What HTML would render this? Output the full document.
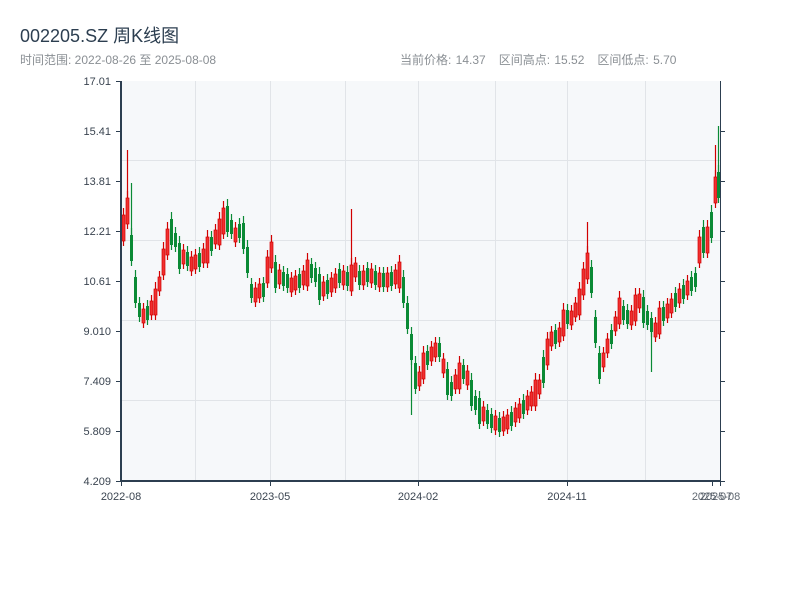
<!DOCTYPE html>
<html><head><meta charset="utf-8"><style>
body{margin:0;width:800px;height:600px;background:#fff;overflow:hidden;font-family:"Liberation Sans","Noto Sans CJK SC",sans-serif}
#t{position:absolute;left:20px;top:22px;font-size:18px;color:#2c3e50}
#s{position:absolute;left:20px;top:51px;font-size:12px;color:#8a8f94}
#r{position:absolute;left:400px;top:51px;font-size:12px;color:#8a8f94;word-spacing:1px}
svg{position:absolute;left:0;top:0}
</style></head><body>
<div id="t">002205.SZ 周K线图</div>
<div id="s">时间范围: 2022-08-26 至 2025-08-08</div>
<div id="r">当前价格: 14.37&nbsp;&nbsp; 区间高点: 15.52&nbsp;&nbsp; 区间低点: 5.70</div>
<svg width="800" height="600" xmlns="http://www.w3.org/2000/svg" xmlns:xlink="http://www.w3.org/1999/xlink">
<defs>
<g id="a"><line x1="0" y1="-13" x2="0" y2="12" stroke="#d10000" stroke-width="1.2"/><rect x="-1.5" y="-7" width="3" height="14" fill="#f03030" stroke="#d10000" stroke-width="0.7"/></g>
<g id="b"><line x1="0" y1="-20" x2="0" y2="18" stroke="#d10000" stroke-width="1.2"/><rect x="-1.5" y="-13" width="3" height="26" fill="#f03030" stroke="#d10000" stroke-width="0.7"/></g>
<g id="c"><line x1="0" y1="-13" x2="0" y2="12" stroke="#0a8a35" stroke-width="1.2"/><rect x="-1.5" y="-7" width="3" height="14" fill="#0a8a35"/></g>
<g id="d"><line x1="0" y1="-20" x2="0" y2="18" stroke="#0a8a35" stroke-width="1.2"/><rect x="-1.5" y="-13" width="3" height="26" fill="#0a8a35"/></g>
</defs>
<rect x="121" y="81" width="599" height="400" fill="#f6f8fa"/>
<g stroke="#e1e4e8" stroke-width="1">
<line x1="195.5" y1="81" x2="195.5" y2="481"/><line x1="270.5" y1="81" x2="270.5" y2="481"/><line x1="345.5" y1="81" x2="345.5" y2="481"/><line x1="418.5" y1="81" x2="418.5" y2="481"/><line x1="495.5" y1="81" x2="495.5" y2="481"/><line x1="567.5" y1="81" x2="567.5" y2="481"/><line x1="645.5" y1="81" x2="645.5" y2="481"/>
<line x1="121" y1="160.5" x2="720" y2="160.5"/><line x1="121" y1="240.5" x2="720" y2="240.5"/><line x1="121" y1="320.5" x2="720" y2="320.5"/><line x1="121" y1="400.5" x2="720" y2="400.5"/>
</g>
<g stroke="#d10000" stroke-width="1.2"><line x1="127.5" y1="150" x2="127.5" y2="200"/><line x1="351.5" y1="209" x2="351.5" y2="270"/><line x1="587.5" y1="222" x2="587.5" y2="260"/><line x1="715.5" y1="145" x2="715.5" y2="180"/></g>
<g stroke="#0a8a35" stroke-width="1.2"><line x1="131.5" y1="183" x2="131.5" y2="240"/><line x1="651.5" y1="325" x2="651.5" y2="372"/><line x1="718.5" y1="126" x2="718.5" y2="175"/><line x1="411.5" y1="350" x2="411.5" y2="415"/></g>
<g>
<use xlink:href="#b" x="123.5" y="228"/><use xlink:href="#b" x="127.5" y="211"/><use xlink:href="#d" x="131.5" y="248"/><use xlink:href="#d" x="135.5" y="290"/><use xlink:href="#c" x="139.5" y="310"/><use xlink:href="#a" x="143.5" y="316"/><use xlink:href="#c" x="147.5" y="313"/><use xlink:href="#a" x="151.5" y="308"/><use xlink:href="#b" x="155.5" y="302"/><use xlink:href="#a" x="159.5" y="284"/>
<use xlink:href="#b" x="163.5" y="262"/><use xlink:href="#b" x="167.5" y="242"/><use xlink:href="#d" x="171.5" y="232"/><use xlink:href="#c" x="175.5" y="240"/><use xlink:href="#d" x="179.5" y="256"/><use xlink:href="#a" x="183.5" y="257"/><use xlink:href="#c" x="187.5" y="259"/><use xlink:href="#a" x="191.5" y="264"/><use xlink:href="#a" x="195.5" y="262"/><use xlink:href="#c" x="199.5" y="260"/>
<use xlink:href="#a" x="203.5" y="256"/><use xlink:href="#b" x="207.5" y="250"/><use xlink:href="#c" x="211.5" y="244"/><use xlink:href="#a" x="215.5" y="237"/><use xlink:href="#b" x="219.5" y="232"/><use xlink:href="#b" x="223.5" y="221"/><use xlink:href="#d" x="227.5" y="219"/><use xlink:href="#c" x="231.5" y="227"/><use xlink:href="#a" x="235.5" y="235"/><use xlink:href="#c" x="239.5" y="231"/>
<use xlink:href="#d" x="243.5" y="236"/><use xlink:href="#d" x="247.5" y="260"/><use xlink:href="#c" x="251.5" y="291"/><use xlink:href="#a" x="255.5" y="295"/><use xlink:href="#a" x="259.5" y="291"/><use xlink:href="#c" x="263.5" y="290"/><use xlink:href="#b" x="267.5" y="270"/><use xlink:href="#b" x="271.5" y="255"/><use xlink:href="#d" x="275.5" y="275"/><use xlink:href="#a" x="279.5" y="277"/>
<use xlink:href="#c" x="283.5" y="279"/><use xlink:href="#c" x="287.5" y="281"/><use xlink:href="#a" x="291.5" y="285"/><use xlink:href="#a" x="295.5" y="283"/><use xlink:href="#c" x="299.5" y="281"/><use xlink:href="#a" x="303.5" y="278"/><use xlink:href="#b" x="307.5" y="273"/><use xlink:href="#c" x="311.5" y="271"/><use xlink:href="#c" x="315.5" y="275"/><use xlink:href="#d" x="319.5" y="287"/>
<use xlink:href="#a" x="323.5" y="289"/><use xlink:href="#c" x="327.5" y="287"/><use xlink:href="#a" x="331.5" y="285"/><use xlink:href="#a" x="335.5" y="281"/><use xlink:href="#c" x="339.5" y="276"/><use xlink:href="#a" x="343.5" y="278"/><use xlink:href="#c" x="347.5" y="279"/><use xlink:href="#b" x="351.5" y="278"/><use xlink:href="#a" x="355.5" y="270"/><use xlink:href="#c" x="359.5" y="278"/>
<use xlink:href="#a" x="363.5" y="278"/><use xlink:href="#c" x="367.5" y="275"/><use xlink:href="#a" x="371.5" y="276"/><use xlink:href="#c" x="375.5" y="278"/><use xlink:href="#a" x="379.5" y="280"/><use xlink:href="#c" x="383.5" y="280"/><use xlink:href="#a" x="387.5" y="280"/><use xlink:href="#c" x="391.5" y="279"/><use xlink:href="#a" x="395.5" y="277"/><use xlink:href="#b" x="399.5" y="275"/>
<use xlink:href="#d" x="403.5" y="290"/><use xlink:href="#d" x="407.5" y="316"/><use xlink:href="#d" x="411.5" y="347"/><use xlink:href="#d" x="415.5" y="376"/><use xlink:href="#a" x="419.5" y="379"/><use xlink:href="#b" x="423.5" y="366"/><use xlink:href="#c" x="427.5" y="358"/><use xlink:href="#a" x="431.5" y="354"/><use xlink:href="#a" x="435.5" y="350"/><use xlink:href="#c" x="439.5" y="350"/>
<use xlink:href="#a" x="443.5" y="366"/><use xlink:href="#d" x="447.5" y="382"/><use xlink:href="#c" x="451.5" y="389"/><use xlink:href="#a" x="455.5" y="382"/><use xlink:href="#b" x="459.5" y="376"/><use xlink:href="#c" x="463.5" y="372"/><use xlink:href="#a" x="467.5" y="378"/><use xlink:href="#d" x="471.5" y="393"/><use xlink:href="#c" x="475.5" y="403"/><use xlink:href="#d" x="479.5" y="411"/>
<use xlink:href="#a" x="483.5" y="414"/><use xlink:href="#c" x="487.5" y="417"/><use xlink:href="#c" x="491.5" y="421"/><use xlink:href="#a" x="495.5" y="423"/><use xlink:href="#c" x="499.5" y="425"/><use xlink:href="#a" x="503.5" y="424"/><use xlink:href="#a" x="507.5" y="422"/><use xlink:href="#c" x="511.5" y="419"/><use xlink:href="#a" x="515.5" y="415"/><use xlink:href="#a" x="519.5" y="411"/>
<use xlink:href="#c" x="523.5" y="407"/><use xlink:href="#a" x="527.5" y="403"/><use xlink:href="#a" x="531.5" y="399"/><use xlink:href="#b" x="535.5" y="393"/><use xlink:href="#a" x="539.5" y="387"/><use xlink:href="#d" x="543.5" y="370"/><use xlink:href="#b" x="547.5" y="352"/><use xlink:href="#a" x="551.5" y="339"/><use xlink:href="#c" x="555.5" y="337"/><use xlink:href="#a" x="559.5" y="335"/>
<use xlink:href="#b" x="563.5" y="323"/><use xlink:href="#c" x="567.5" y="317"/><use xlink:href="#a" x="571.5" y="318"/><use xlink:href="#a" x="575.5" y="310"/><use xlink:href="#b" x="579.5" y="302"/><use xlink:href="#b" x="583.5" y="282"/><use xlink:href="#b" x="587.5" y="266"/><use xlink:href="#d" x="591.5" y="280"/><use xlink:href="#d" x="595.5" y="330"/><use xlink:href="#d" x="599.5" y="366"/>
<use xlink:href="#a" x="603.5" y="360"/><use xlink:href="#a" x="607.5" y="346"/><use xlink:href="#c" x="611.5" y="337"/><use xlink:href="#a" x="615.5" y="324"/><use xlink:href="#b" x="619.5" y="311"/><use xlink:href="#c" x="623.5" y="313"/><use xlink:href="#c" x="627.5" y="317"/><use xlink:href="#a" x="631.5" y="318"/><use xlink:href="#b" x="635.5" y="308"/><use xlink:href="#a" x="639.5" y="301"/>
<use xlink:href="#d" x="643.5" y="310"/><use xlink:href="#c" x="647.5" y="318"/><use xlink:href="#c" x="651.5" y="325"/><use xlink:href="#a" x="655.5" y="330"/><use xlink:href="#b" x="659.5" y="321"/><use xlink:href="#c" x="663.5" y="314"/><use xlink:href="#a" x="667.5" y="311"/><use xlink:href="#a" x="671.5" y="306"/><use xlink:href="#c" x="675.5" y="300"/><use xlink:href="#a" x="679.5" y="296"/>
<use xlink:href="#c" x="683.5" y="292"/><use xlink:href="#a" x="687.5" y="288"/><use xlink:href="#c" x="691.5" y="284"/><use xlink:href="#c" x="695.5" y="280"/><use xlink:href="#b" x="699.5" y="250"/><use xlink:href="#d" x="703.5" y="240"/><use xlink:href="#b" x="707.5" y="240"/><use xlink:href="#d" x="711.5" y="225"/><use xlink:href="#b" x="715.5" y="190"/><use xlink:href="#d" x="718.5" y="185"/>
</g>
<g stroke="#2c3e50" stroke-width="1">
<line x1="121" y1="81" x2="121" y2="482" stroke-width="2"/>
<line x1="120" y1="481" x2="721" y2="481" stroke-width="2"/>
<line x1="720.5" y1="81" x2="720.5" y2="481"/>
<line x1="116" y1="81.5" x2="121" y2="81.5"/><line x1="116" y1="131.5" x2="121" y2="131.5"/><line x1="116" y1="181.5" x2="121" y2="181.5"/><line x1="116" y1="231.5" x2="121" y2="231.5"/><line x1="116" y1="281.5" x2="121" y2="281.5"/><line x1="116" y1="331.5" x2="121" y2="331.5"/><line x1="116" y1="381.5" x2="121" y2="381.5"/><line x1="116" y1="431.5" x2="121" y2="431.5"/><line x1="116" y1="481.5" x2="121" y2="481.5"/>
<line x1="720" y1="131.5" x2="725" y2="131.5"/><line x1="720" y1="181.5" x2="725" y2="181.5"/><line x1="720" y1="231.5" x2="725" y2="231.5"/><line x1="720" y1="281.5" x2="725" y2="281.5"/><line x1="720" y1="331.5" x2="725" y2="331.5"/><line x1="720" y1="381.5" x2="725" y2="381.5"/><line x1="720" y1="431.5" x2="725" y2="431.5"/><line x1="720" y1="481.5" x2="725" y2="481.5"/>
<line x1="121.5" y1="481" x2="121.5" y2="486"/><line x1="270.5" y1="481" x2="270.5" y2="486"/><line x1="418.5" y1="481" x2="418.5" y2="486"/><line x1="567.5" y1="481" x2="567.5" y2="486"/><line x1="712.5" y1="481" x2="712.5" y2="486"/><line x1="720.5" y1="481" x2="720.5" y2="486"/>
</g>
<g font-family="Liberation Sans,sans-serif" font-size="11" fill="#3a4450" text-anchor="end">
<text x="111" y="85">17.01</text><text x="111" y="135">15.41</text><text x="111" y="185">13.81</text><text x="111" y="235">12.21</text><text x="111" y="285">10.61</text><text x="111" y="335">9.010</text><text x="111" y="385">7.409</text><text x="111" y="435">5.809</text><text x="111" y="485">4.209</text>
</g>
<g font-family="Liberation Sans,sans-serif" font-size="11" fill="#3a4450" text-anchor="middle">
<text x="121" y="500">2022-08</text><text x="270" y="500">2023-05</text><text x="418" y="500">2024-02</text><text x="567" y="500">2024-11</text><text x="712" y="500" opacity="0.8">2025-07</text><text x="720" y="500" opacity="0.8">2025-08</text>
</g>
</svg>
</body></html>
